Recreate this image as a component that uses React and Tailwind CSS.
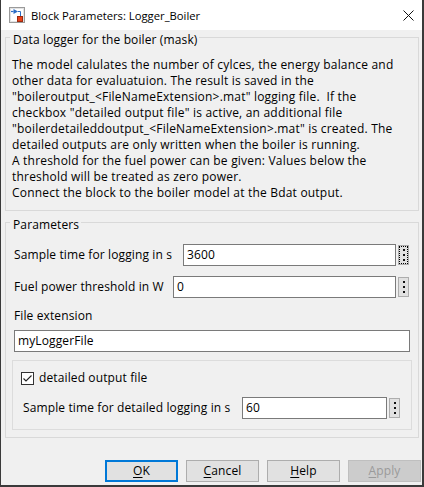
import React from "react";

const lines = [
  "The model calulates the number of cylces, the energy balance and",
  "other data for evaluatuion. The result is saved in the",
  "\"boileroutput_<FileNameExtension>.mat\" logging file.  If the",
  "checkbox \"detailed output file\" is active, an additional file",
  "\"boilerdetaileddoutput_<FileNameExtension>.mat\" is created. The",
  "detailed outputs are only written when the boiler is running.",
  "A threshold for the fuel power can be given: Values below the",
  "threshold will be treated as zero power.",
  "Connect the block to the boiler model at the Bdat output.",
];

function BlockIcon() {
  return (
    <svg width="16" height="16" viewBox="0 0 16 16" className="shrink-0">
      <rect x="0.5" y="0.5" width="15" height="15" fill="#f4f4f4" stroke="#9a9a9a" />
      <rect x="1.5" y="1.5" width="13" height="13" fill="#ffffff" stroke="#e2e2e2" />
      <path d="M2 4.5 H4.5" stroke="#2b6cc4" strokeWidth="1.2" />
      <path d="M4.5 2 L9 4.5 L4.5 7 Z" fill="#2b6cc4" />
      <path d="M9 4.5 H11.5 V9" stroke="#2b6cc4" strokeWidth="1" fill="none" />
      <rect x="8.5" y="9.5" width="5" height="5" fill="#e8421a" stroke="#9c2a0e" />
    </svg>
  );
}

function CloseIcon() {
  return (
    <svg width="11" height="11" viewBox="0 0 11 11">
      <path d="M0.5 0.5 L10.5 10.5 M10.5 0.5 L0.5 10.5" stroke="#111" strokeWidth="1" />
    </svg>
  );
}

function Dots({ focused }) {
  return (
    <div className="ml-[2px] flex h-[20px] w-[11px] shrink-0 border border-[#adadad] bg-[#e1e1e1]">
      <div
        className={
          "flex flex-1 flex-col items-center justify-center gap-[3px] " +
          (focused ? "border border-dotted border-black" : "")
        }
      >
        <span className="h-[2px] w-[2px] bg-[#111]" />
        <span className="h-[2px] w-[2px] bg-[#111]" />
        <span className="h-[2px] w-[2px] bg-[#111]" />
      </div>
    </div>
  );
}

function Field({ value, className = "" }) {
  return (
    <div
      className={
        "flex h-[22px] items-center border border-[#7a7a7a] bg-white pl-[3px] leading-[16px] " +
        className
      }
    >
      {value}
    </div>
  );
}

function Btn({ children, variant }) {
  let cls =
    "flex h-[22px] w-[73px] items-center justify-center leading-[16px] ";
  if (variant === "default") cls += "border-2 border-[#0078d7] bg-[#e1e1e1] text-black";
  else if (variant === "disabled") cls += "border border-[#bfbfbf] bg-[#cccccc] text-[#9a9a9a]";
  else cls += "border border-[#adadad] bg-[#e1e1e1] text-black";
  return <div className={cls}>{children}</div>;
}

export default function App() {
  return (
    <div className="flex h-[487px] w-[424px] flex-col border-b-2 border-l border-r-2 border-[#3a3a3a] bg-[#f0f0f0] font-['Open_Sans','Noto_Sans',sans-serif] text-[12px] leading-[16px] tracking-[0.12px] text-black">
      {/* Title bar */}
      <div className="flex h-[30px] shrink-0 items-center bg-white pl-[8px] pr-[8px]">
        <BlockIcon />
        <div className="ml-[6px] flex-1 pt-[1px] text-[11.25px] tracking-normal">Block Parameters: Logger_Boiler</div>
        <CloseIcon />
      </div>

      {/* Description group */}
      <fieldset className="mt-[-3px] ml-[4px] mr-[3px] border border-[#d9d9d9] pl-[6px] pr-[6px] pb-[9px]">
        <legend className="ml-[-2px] pl-[3px] pr-[2px] pt-[5px] leading-[16px]">
          Data logger for the boiler (mask)
        </legend>
        <div className="mt-[9px] tracking-[0.2px]">
          {lines.map((l, i) => (
            <div key={i} className="h-[16px] whitespace-pre">
              {l}
            </div>
          ))}
        </div>
      </fieldset>

      {/* Parameters group */}
      <fieldset className="mt-[1px] ml-[4px] mr-[3px] border border-[#d9d9d9] pl-[8px] pr-[8px] pb-[7px]">
        <legend className="ml-[-4px] pl-[3px] pr-[2px] pt-[5px] leading-[16px]">Parameters</legend>

        <div className="mt-[11px] mr-[1px] flex items-center">
          <div className="w-[169px] shrink-0 whitespace-nowrap">Sample time for logging in s</div>
          <Field value="3600" className="flex-1" />
          <Dots focused />
        </div>

        <div className="mt-[10px] mr-[1px] flex items-center">
          <div className="w-[159px] shrink-0 whitespace-nowrap">Fuel power threshold in W</div>
          <Field value="0" className="flex-1" />
          <Dots />
        </div>

        <div className="mt-[10px] h-[16px]">File extension</div>
        <Field value="myLoggerFile" className="mt-[6px]" />

        <div className="mx-[-2px] mt-[8px] border border-[#dcdcdc] pl-[8px] pb-[10px] pt-[9px]">
          <div className="flex h-[16px] items-center">
            <svg width="13" height="13" viewBox="0 0 13 13" className="shrink-0">
              <rect x="0.5" y="0.5" width="12" height="12" fill="#ffffff" stroke="#333333" />
              <path d="M2.5 6.5 L5 9 L10.5 3.5" stroke="#222" strokeWidth="1.1" fill="none" />
            </svg>
            <span className="ml-[5px]">detailed output file</span>
          </div>
          <div className="mt-[11px] ml-[1px] flex items-center">
            <div className="w-[220px] shrink-0 whitespace-nowrap pl-[1px]">
              Sample time for detailed logging in s
            </div>
            <Field value="60" className="w-[145px]" />
            <Dots />
          </div>
        </div>
      </fieldset>

      {/* Buttons */}
      <div className="mt-[22px] flex justify-end gap-[8px] pr-[1px]">
        <Btn variant="default">
          <span>
            <span className="underline underline-offset-[2px]">O</span>K
          </span>
        </Btn>
        <Btn>
          <span>
            <span className="underline underline-offset-[2px]">C</span>ancel
          </span>
        </Btn>
        <Btn>
          <span>
            <span className="underline underline-offset-[2px]">H</span>elp
          </span>
        </Btn>
        <Btn variant="disabled">
          <span>
            <span className="underline underline-offset-[2px]">A</span>pply
          </span>
        </Btn>
      </div>
    </div>
  );
}
